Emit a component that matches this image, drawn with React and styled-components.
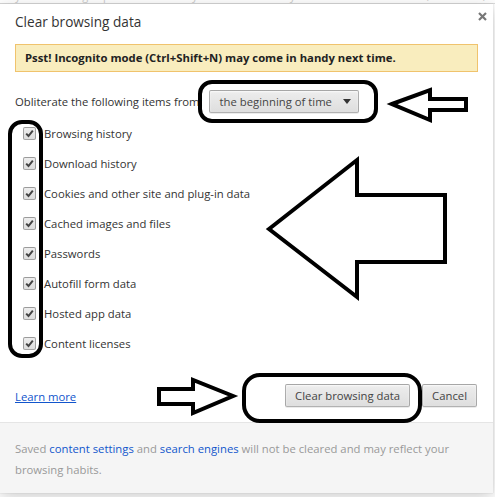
import styled, { createGlobalStyle } from "styled-components";

const GlobalStyle = createGlobalStyle`
  html, body {
    margin: 0;
    padding: 0;
    background: #fff;
  }
  body {
    font-family: "Open Sans", "Noto Sans", sans-serif;
    font-size: 11.3px;
    color: #333;
  }
`;

const Page = styled.div`
  position: relative;
  width: 495px;
  height: 497px;
  overflow: hidden;
  background: #fff;
`;

const BehindStrip = styled.div`
  height: 3px;
  overflow: hidden;
  border-bottom: 1px solid #dcdcdc;
  padding-left: 15px;
  white-space: nowrap;

  span {
    display: block;
    margin-top: -11px;
    line-height: 14px;
    font-size: 11px;
    color: #ccc;
  }
`;

const Dialog = styled.div`
  position: relative;
  width: 493px;
  background: #fff;
  box-shadow: 0 4px 16px rgba(0, 0, 0, 0.2), 0 0 1px rgba(0, 0, 0, 0.2);
`;

const Body = styled.div`
  padding: 0 15px;
`;

const Title = styled.h1`
  margin: 0;
  font-size: 13.6px;
  font-weight: normal;
  line-height: 36px;
  color: #333;
`;

const Close = styled.button`
  position: absolute;
  top: 4px;
  right: 3px;
  width: 16px;
  height: 16px;
  padding: 0;
  border: 0;
  background: none;
  display: flex;
  align-items: center;
  justify-content: center;
`;

const Banner = styled.div`
  margin-top: 4px;
  height: 28px;
  box-sizing: border-box;
  border: 1px solid #f0c36d;
  background: #f9edbe;
  padding: 0 9px;
  line-height: 26px;
  font-weight: bold;
  color: #222;
  white-space: nowrap;
`;

const RangeRow = styled.div`
  margin-top: 18px;
  height: 23px;
  display: flex;
  align-items: center;
  gap: 6px;
  color: #333;
`;

const Select = styled.div`
  width: 150px;
  height: 23px;
  box-sizing: border-box;
  border: 1px solid rgba(0, 0, 0, 0.25);
  border-radius: 2px;
  background: linear-gradient(#ededed, #dedede);
  box-shadow: 0 1px 0 rgba(0, 0, 0, 0.08), inset 0 1px 2px rgba(255, 255, 255, 0.75);
  display: flex;
  align-items: center;
  justify-content: space-between;
  padding: 0 7px 0 10px;
  color: #444;
`;

const Caret = styled.span`
  width: 0;
  height: 0;
  border-left: 4px solid transparent;
  border-right: 4px solid transparent;
  border-top: 5px solid #333;
`;

const CheckList = styled.ul`
  list-style: none;
  margin: 5px 0 0;
  padding: 0;
`;

const CheckRow = styled.li`
  height: 30px;
  display: flex;
  align-items: center;
  gap: 8px;
  padding-left: 8px;
  color: #333;
`;

const Box = styled.span`
  width: 13px;
  height: 13px;
  box-sizing: border-box;
  border: 1px solid rgba(0, 0, 0, 0.3);
  border-radius: 2px;
  background: linear-gradient(#ededed, #dedede);
  display: flex;
  align-items: center;
  justify-content: center;
`;

const ActionRow = styled.div`
  margin-top: 26px;
  height: 23px;
  display: flex;
  align-items: center;
  padding-right: 1px;
`;

const Link = styled.a`
  color: #15c;
  text-decoration: underline;
  margin-right: auto;
  margin-top: 2px;
`;

const Button = styled.button`
  height: 23px;
  margin-left: 12px;
  padding: 0 ${(p) => p.$pad}px;
  box-sizing: border-box;
  border: 1px solid rgba(0, 0, 0, 0.25);
  border-radius: 2px;
  background: linear-gradient(#ededed, #dedede);
  box-shadow: 0 1px 0 rgba(0, 0, 0, 0.08), inset 0 1px 2px rgba(255, 255, 255, 0.75);
  font-family: inherit;
  font-size: 11.3px;
  color: #444;
`;

const Footer = styled.div`
  margin-top: 15px;
  border-top: 1px solid #e5e5e5;
  background: #f5f5f5;
  padding: 15px 15px 13px;
  line-height: 21px;
  color: #999;
`;

const FooterLink = styled.a`
  color: #15c;
  text-decoration: none;
`;

const Overlay = styled.svg`
  position: absolute;
  left: 0;
  top: 0;
  pointer-events: none;
`;

const items = [
  "Browsing history",
  "Download history",
  "Cookies and other site and plug-in data",
  "Cached images and files",
  "Passwords",
  "Autofill form data",
  "Hosted app data",
  "Content licenses",
];

function Check() {
  return (
    <svg width="9" height="9" viewBox="0 0 9 9">
      <path d="M1.2 4.6 L3.5 7 L7.8 1.6" fill="none" stroke="#444" strokeWidth="2" />
    </svg>
  );
}

export default function App() {
  return (
    <Page>
      <GlobalStyle />
      <BehindStrip>
        <span>your browsing experience. You may customize the way some sites behave in this, and other, browsers</span>
      </BehindStrip>
      <Dialog>
        <Close aria-label="Close">
          <svg width="9" height="9" viewBox="0 0 9 9">
            <path d="M1 1 L8 8 M8 1 L1 8" stroke="#777" strokeWidth="2.2" />
          </svg>
        </Close>
        <Body>
          <Title>Clear browsing data</Title>
          <Banner>Psst! Incognito mode (Ctrl+Shift+N) may come in handy next time.</Banner>
          <RangeRow>
            <span>Obliterate the following items from:</span>
            <Select>
              <span>the beginning of time</span>
              <Caret />
            </Select>
          </RangeRow>
          <CheckList>
            {items.map((label) => (
              <CheckRow key={label}>
                <Box>
                  <Check />
                </Box>
                <span>{label}</span>
              </CheckRow>
            ))}
          </CheckList>
          <ActionRow>
            <Link href="#">Learn more</Link>
            <Button $pad={9}>Clear browsing data</Button>
            <Button $pad={9}>Cancel</Button>
          </ActionRow>
        </Body>
        <Footer>
          Saved <FooterLink href="#">content settings</FooterLink> and{" "}
          <FooterLink href="#">search engines</FooterLink> will not be cleared and may reflect your
          browsing habits.
        </Footer>
      </Dialog>

      {/* hand-drawn annotations lying over the dialog */}
      <Overlay width="495" height="497" viewBox="0 0 495 497">
        <g fill="none" stroke="#000" strokeWidth="4" strokeLinejoin="miter">
          <rect x="200" y="82" width="176" height="39" rx="12" />
          <polygon points="392,104 430,90 430,99 466,99 466,110 430,110 430,120" />
          <rect x="10" y="122" width="31" height="234" rx="12" />
          <polygon points="269,229 357,160 357,195 445,195 445,262 357,262 357,297" />
          <polygon points="159,389 193,389 193,380 233,396 193,413 193,404 159,404" />
          <rect x="244" y="375" width="176" height="46" rx="16" />
        </g>
      </Overlay>
    </Page>
  );
}
